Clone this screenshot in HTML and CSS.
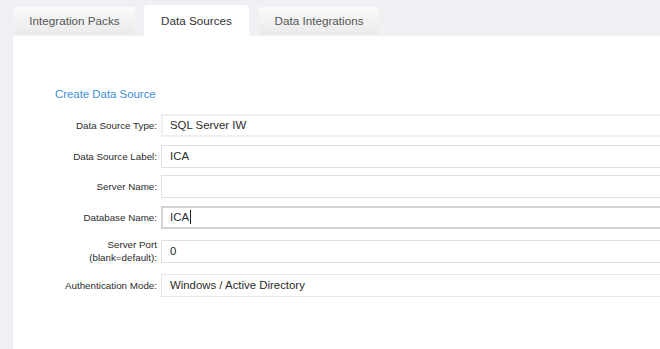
FILE: index.html
```html
<!DOCTYPE html>
<html>
    <head>
        <link rel="stylesheet" href="styles.css">
    </head>

    <body>
        <div class="tabs">
            <div class="tab packs-tab">Integration Packs</div>
            <div class="tab active sources-tab">Data Sources</div>
            <div class="tab integrations-tab">Data Integrations</div>
        </div>

        <div class="panel">
            <h2 class="form-title">Create Data Source</h2>

            <div class="form-row">
                <label>Data Source Type:</label>
                <div class="field select">SQL Server IW</div>
            </div>
            <div class="form-row">
                <label>Data Source Label:</label>
                <div class="field">ICA</div>
            </div>
            <div class="form-row">
                <label>Server Name:</label>
                <div class="field"></div>
            </div>
            <div class="form-row">
                <label>Database Name:</label>
                <div class="field focused">ICA<span class="caret"></span></div>
            </div>
            <div class="form-row">
                <label class="two-line">Server Port<br>(blank=default):</label>
                <div class="field">0</div>
            </div>
            <div class="form-row">
                <label>Authentication Mode:</label>
                <div class="field select last">Windows / Active Directory</div>
            </div>
        </div>
    </body>
</html>
```

FILE: styles.css
```css
body {
    font-family: "Liberation Sans", Arial, sans-serif;
    background-color: #eef0f4;
    margin: 0;
    padding: 0;
    overflow: hidden;
    height: 349px;
}

.tabs {
    display: flex;
    align-items: flex-end;
    padding: 0 0 0 13px;
    height: 36px;
}

.tab {
    box-sizing: border-box;
    height: 30px;
    line-height: 29px;
    text-align: center;
    margin-right: 8px;
    font-size: 11.7px;
    color: #555;
    border-radius: 4px 4px 0 0;
    background: linear-gradient(#fbfbfb, #e9e9ea);
    box-shadow: inset 0 0 0 1px #f2f2f3;
}

.packs-tab {
    width: 123px;
}

.sources-tab {
    width: 105px;
    margin-right: 9px;
}

.integrations-tab {
    width: 122px;
}

.tab.active {
    height: 31px;
    line-height: 31px;
    color: #333;
    background: #ffffff;
    box-shadow: none;
}

.panel {
    box-sizing: border-box;
    background-color: #ffffff;
    margin-left: 13px;
    height: 313px;
    padding: 51px 0 0 42px;
    overflow: hidden;
}

.form-title {
    margin: 0 0 13px 0;
    font-size: 11.4px;
    line-height: 14px;
    font-weight: normal;
    color: #3c8fd6;
}

.form-row {
    display: flex;
    align-items: center;
    margin-bottom: 7.5px;
}

.form-row label {
    width: 102px;
    flex-shrink: 0;
    margin-right: 4px;
    text-align: right;
    font-size: 9.8px;
    line-height: 13px;
    color: #2b2b2b;
}

.form-row label.two-line {
    padding: 2px 0;
}

.field {
    box-sizing: border-box;
    width: 620px;
    flex-shrink: 0;
    height: 23px;
    line-height: 21px;
    padding: 0 8px;
    border: 1px solid #e0e0e0;
    font-size: 11.4px;
    color: #2b2b2b;
}

.field.select {
    border: 2px solid #efefef;
    line-height: 19px;
    padding: 0 7px;
}

.field.select.last {
    border: 1px solid #e6e6e6;
    line-height: 21px;
    padding: 0 8px;
}

.field.focused {
    border: 2px solid #d2d2d2;
    line-height: 19px;
    padding: 0 7px;
}

.caret {
    display: inline-block;
    width: 1px;
    height: 14px;
    margin-left: 1px;
    background-color: #222;
    vertical-align: -3px;
}
```
